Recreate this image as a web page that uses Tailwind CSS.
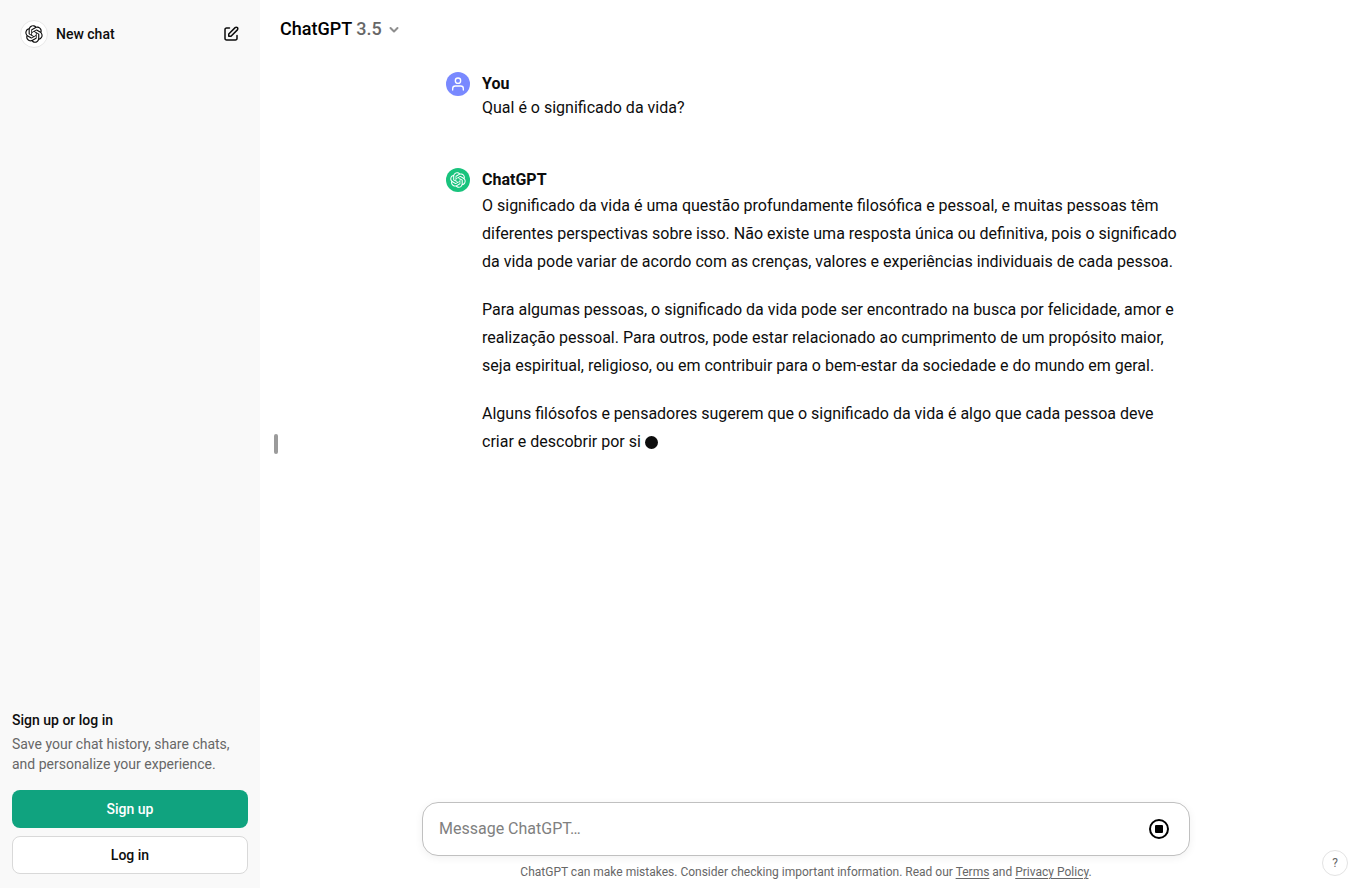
<!DOCTYPE html>
<html lang="en">
<head>
<meta charset="utf-8">
<meta name="viewport" content="width=device-width, initial-scale=1">
<title>ChatGPT</title>
<script src="https://cdn.jsdelivr.net/npm/@tailwindcss/browser@4"></script>
</head>
<body class="flex h-screen overflow-hidden bg-white font-['Roboto','Liberation_Sans',sans-serif] text-[#0d0d0d]">
<svg class="hidden" aria-hidden="true">
  <symbol id="logo" viewBox="0 0 41 41"><path fill="currentColor" d="M37.5324 16.8707C37.9808 15.5241 38.1363 14.0974 37.9886 12.6859C37.8409 11.2744 37.3934 9.91076 36.676 8.68622C35.6126 6.83404 33.9882 5.3676 32.0373 4.4985C30.0864 3.62941 27.9098 3.40259 25.8215 3.85078C24.8796 2.7893 23.7219 1.94125 22.4257 1.36341C21.1295 0.785575 19.7249 0.491269 18.3058 0.500197C16.1708 0.495044 14.0893 1.16803 12.3614 2.42214C10.6335 3.67624 9.34853 5.44666 8.6917 7.47815C7.30085 7.76286 5.98686 8.3414 4.8377 9.17505C3.68854 10.0087 2.73073 11.0782 2.02839 12.312C0.956464 14.1591 0.498905 16.2988 0.721698 18.4228C0.944492 20.5467 1.83612 22.5449 3.268 24.1293C2.81966 25.4759 2.66413 26.9026 2.81182 28.3141C2.95951 29.7256 3.40701 31.0892 4.12437 32.3138C5.18791 34.1659 6.8123 35.6322 8.76321 36.5013C10.7141 37.3704 12.8907 37.5973 14.9789 37.1492C15.9208 38.2107 17.0786 39.0587 18.3747 39.6366C19.6709 40.2144 21.0755 40.5087 22.4946 40.4998C24.6307 40.5054 26.7133 39.8321 28.4418 38.5772C30.1704 37.3223 31.4556 35.5506 32.1119 33.5179C33.5027 33.2332 34.8167 32.6547 35.9659 31.821C37.115 30.9874 38.0728 29.9178 38.7752 28.684C39.8458 26.8371 40.3023 24.6979 40.0789 22.5748C39.8556 20.4517 38.9639 18.4544 37.5324 16.8707ZM22.4978 37.8849C20.7443 37.8874 19.0459 37.2733 17.6994 36.1501C17.7601 36.117 17.8666 36.0586 17.936 36.0161L25.9004 31.4156C26.1003 31.3019 26.2663 31.137 26.3813 30.9378C26.4964 30.7386 26.5563 30.5124 26.5549 30.2825V19.0542L29.9213 20.998C29.9389 21.0068 29.9541 21.0198 29.9656 21.0359C29.977 21.052 29.9842 21.0707 29.9867 21.0902V30.3889C29.9842 32.375 29.1946 34.2791 27.7909 35.6841C26.3872 37.0892 24.4838 37.8806 22.4978 37.8849ZM6.39227 31.0064C5.51397 29.4888 5.19742 27.7107 5.49804 25.9832C5.55718 26.0187 5.66048 26.0818 5.73461 26.1244L13.699 30.7248C13.8975 30.8408 14.1233 30.902 14.3532 30.902C14.583 30.902 14.8088 30.8408 15.0073 30.7248L24.731 25.1103V28.9979C24.7321 29.0177 24.7283 29.0376 24.7199 29.0556C24.7115 29.0736 24.6988 29.0893 24.6829 29.1012L16.6317 33.7497C14.9096 34.7416 12.8643 35.0097 10.9447 34.4954C9.02506 33.9811 7.38785 32.7263 6.39227 31.0064ZM4.29707 13.6194C5.17156 12.0998 6.55279 10.9364 8.19885 10.3327C8.19885 10.4013 8.19491 10.5228 8.19491 10.6071V19.808C8.19351 20.0378 8.25334 20.2638 8.36823 20.4629C8.48312 20.6619 8.64893 20.8267 8.84863 20.9404L18.5723 26.5542L15.206 28.4979C15.1894 28.5089 15.1703 28.5155 15.1505 28.5173C15.1307 28.5191 15.1107 28.516 15.0924 28.5082L7.04046 23.8557C5.32135 22.8601 4.06716 21.2235 3.55289 19.3046C3.03862 17.3858 3.30624 15.3413 4.29707 13.6194ZM31.955 20.0556L22.2312 14.4411L25.5976 12.4981C25.6142 12.4872 25.6333 12.4805 25.6531 12.4787C25.6729 12.4769 25.6928 12.4801 25.7111 12.4879L33.7631 17.1364C34.9967 17.849 36.0017 18.8982 36.6606 20.1613C37.3194 21.4244 37.6047 22.849 37.4832 24.2684C37.3617 25.6878 36.8382 27.0432 35.9743 28.1759C35.1103 29.3086 33.9415 30.1717 32.6047 30.6641C32.6047 30.5947 32.6047 30.4733 32.6047 30.3889V21.188C32.6066 20.9586 32.5474 20.7328 32.4332 20.5338C32.319 20.3348 32.154 20.1698 31.955 20.0556ZM35.3055 15.0128C35.2464 14.9765 35.1431 14.9142 35.069 14.8717L27.1045 10.2712C26.906 10.1554 26.6803 10.0943 26.4504 10.0943C26.2206 10.0943 25.9948 10.1554 25.7963 10.2712L16.0726 15.8858V11.9982C16.0715 11.9783 16.0753 11.9585 16.0837 11.9405C16.0921 11.9225 16.1048 11.9068 16.1207 11.8949L24.1719 7.25025C25.4053 6.53903 26.8158 6.19376 28.2383 6.25482C29.6608 6.31589 31.0364 6.78077 32.2044 7.59508C33.3723 8.40939 34.2842 9.53945 34.8334 10.8531C35.3826 12.1667 35.5464 13.6095 35.3055 15.0128ZM14.2424 21.9419L10.8752 19.9981C10.8576 19.9893 10.8423 19.9763 10.8309 19.9602C10.8195 19.9441 10.8122 19.9254 10.8098 19.9058V10.6071C10.8107 9.18295 11.2173 7.78848 11.9819 6.58696C12.7466 5.38544 13.8377 4.42659 15.1275 3.82264C16.4173 3.21869 17.8524 2.99464 19.2649 3.1767C20.6775 3.35876 22.0089 3.93941 23.1034 4.85067C23.0427 4.88379 22.937 4.94215 22.8668 4.98473L14.9024 9.58517C14.7025 9.69878 14.5366 9.86356 14.4215 10.0626C14.3065 10.2616 14.2466 10.4877 14.2479 10.7175L14.2424 21.9419ZM16.071 17.9991L20.4018 15.4978L24.7325 17.9975V22.9985L20.4018 25.4983L16.071 22.9985V17.9991Z"/></symbol>
</svg>

<aside class="flex w-[260px] shrink-0 flex-col justify-between bg-[#f9f9f9] px-3 py-3.5 text-sm">
  <a href="#" class="flex h-10 items-center gap-2 rounded-lg px-2 font-medium">
    <span class="flex size-7 items-center justify-center rounded-full border border-[#e8e8e8] bg-white"><svg class="size-[18px]" aria-hidden="true"><use href="#logo"/></svg></span>
    <span class="grow">New chat</span>
    <svg class="size-[18px]" viewBox="0 0 24 24" fill="currentColor" aria-hidden="true"><path fill-rule="evenodd" clip-rule="evenodd" d="M16.7929 2.79289C18.0118 1.57394 19.9882 1.57394 21.2071 2.79289C22.4261 4.01184 22.4261 5.98815 21.2071 7.20711L12.7071 15.7071C12.5196 15.8946 12.2652 16 12 16H9C8.44772 16 8 15.5523 8 15V12C8 11.7348 8.10536 11.4804 8.29289 11.2929L16.7929 2.79289ZM19.7929 4.20711C19.355 3.7692 18.645 3.7692 18.2071 4.2071L10 12.4142V14H11.5858L19.7929 5.79289C20.2308 5.35499 20.2308 4.64501 19.7929 4.20711ZM6 5C5.44772 5 5 5.44771 5 6V18C5 18.5523 5.44772 19 6 19H18C18.5523 19 19 18.5523 19 18V14C19 13.4477 19.4477 13 20 13C20.5523 13 21 13.4477 21 14V18C21 19.6569 19.6569 21 18 21H6C4.34315 21 3 19.6569 3 18V6C3 4.34314 4.34315 3 6 3H10C10.5523 3 11 3.44771 11 4C11 4.55228 10.5523 5 10 5H6Z"/></svg>
  </a>
  <section>
    <h2 class="mb-1 font-medium">Sign up or log in</h2>
    <p class="mb-4 text-[#676767]">Save your chat history, share chats,<br>and personalize your experience.</p>
    <div class="flex flex-col gap-2 font-medium">
      <button class="h-[38px] rounded-lg bg-[#10a37f] text-white">Sign up</button>
      <button class="h-[38px] rounded-lg border border-[#d9d9d9] bg-white">Log in</button>
    </div>
  </section>
</aside>

<main class="relative flex min-w-0 grow flex-col">
  <header class="flex h-[58px] items-center px-5">
    <button class="flex items-center gap-1 text-lg font-medium text-black">
      <span>ChatGPT <span class="text-[#676767]">3.5</span></span>
      <svg class="size-4 text-[#8e8e8e]" viewBox="0 0 16 16" fill="none" stroke="currentColor" stroke-width="2" stroke-linecap="round" stroke-linejoin="round" aria-hidden="true"><path d="M4.5 7 8 10.500 11.500 7"/></svg>
    </button>
  </header>

  <div class="grow overflow-hidden pr-2">
    <div class="mx-auto flex max-w-[768px] flex-col gap-12 px-6 pt-3.5">
      <article class="flex gap-3">
        <span class="flex size-6 shrink-0 items-center justify-center rounded-full bg-[#7989ff] text-white">
          <svg class="size-4" viewBox="0 0 24 24" fill="none" stroke="currentColor" stroke-width="2" stroke-linecap="round" stroke-linejoin="round" aria-hidden="true"><path d="M20 21v-2a4 4 0 0 0-4-4H8a4 4 0 0 0-4 4v2"/><circle cx="12" cy="7" r="4"/></svg>
        </span>
        <div>
          <h3 class="font-bold">You</h3>
          <p>Qual é o significado da vida?</p>
        </div>
      </article>
      <article class="flex gap-3">
        <span class="flex size-6 shrink-0 items-center justify-center rounded-full bg-[#19c37d] text-white"><svg class="size-4" aria-hidden="true"><use href="#logo"/></svg></span>
        <div class="min-w-0 grow">
          <h3 class="font-bold">ChatGPT</h3>
          <div class="flex flex-col gap-5 leading-7 whitespace-nowrap">
            <p>O significado da vida é uma questão profundamente filosófica e pessoal, e muitas pessoas têm<br>diferentes perspectivas sobre isso. Não existe uma resposta única ou definitiva, pois o significado<br>da vida pode variar de acordo com as crenças, valores e experiências individuais de cada pessoa.</p>
            <p>Para algumas pessoas, o significado da vida pode ser encontrado na busca por felicidade, amor e<br>realização pessoal. Para outros, pode estar relacionado ao cumprimento de um propósito maior,<br>seja espiritual, religioso, ou em contribuir para o bem-estar da sociedade e do mundo em geral.</p>
            <p>Alguns filósofos e pensadores sugerem que o significado da vida é algo que cada pessoa deve<br>criar e descobrir por si <span class="inline-block size-[13px] rounded-full bg-[#0d0d0d] align-middle"></span></p>
          </div>
        </div>
      </article>
    </div>
  </div>

  <footer class="pr-2">
    <form class="mx-auto flex h-[54px] max-w-[768px] items-center rounded-2xl border border-[#c0c0c0] bg-white pr-5 pl-4 shadow-[0_2px_8px_rgba(0,0,0,0.06)]">
      <input type="text" aria-label="Message ChatGPT" placeholder="Message ChatGPT…" class="min-w-0 grow bg-transparent outline-none placeholder:text-[#808080]">
      <button type="button" aria-label="Stop generating" class="flex size-5 items-center justify-center rounded-full border-2 border-black"><span class="size-2 rounded-[1px] bg-black"></span></button>
    </form>
    <p class="pt-2 pb-2 text-center text-xs text-[#676767]">ChatGPT can make mistakes. Consider checking important information. Read our <a href="#" class="underline underline-offset-2">Terms</a> and <a href="#" class="underline underline-offset-2">Privacy Policy</a>.</p>
  </footer>

  <button aria-label="Close sidebar" class="absolute top-1/2 left-3.5 h-5 w-1 -translate-y-1/2 rounded-full bg-[#9b9b9b]"></button>
  <button aria-label="Help" class="absolute right-3 bottom-3 size-[26px] rounded-full border border-[#e3e3e3] bg-white text-xs text-[#676767]">?</button>
</main>
</body>
</html>
